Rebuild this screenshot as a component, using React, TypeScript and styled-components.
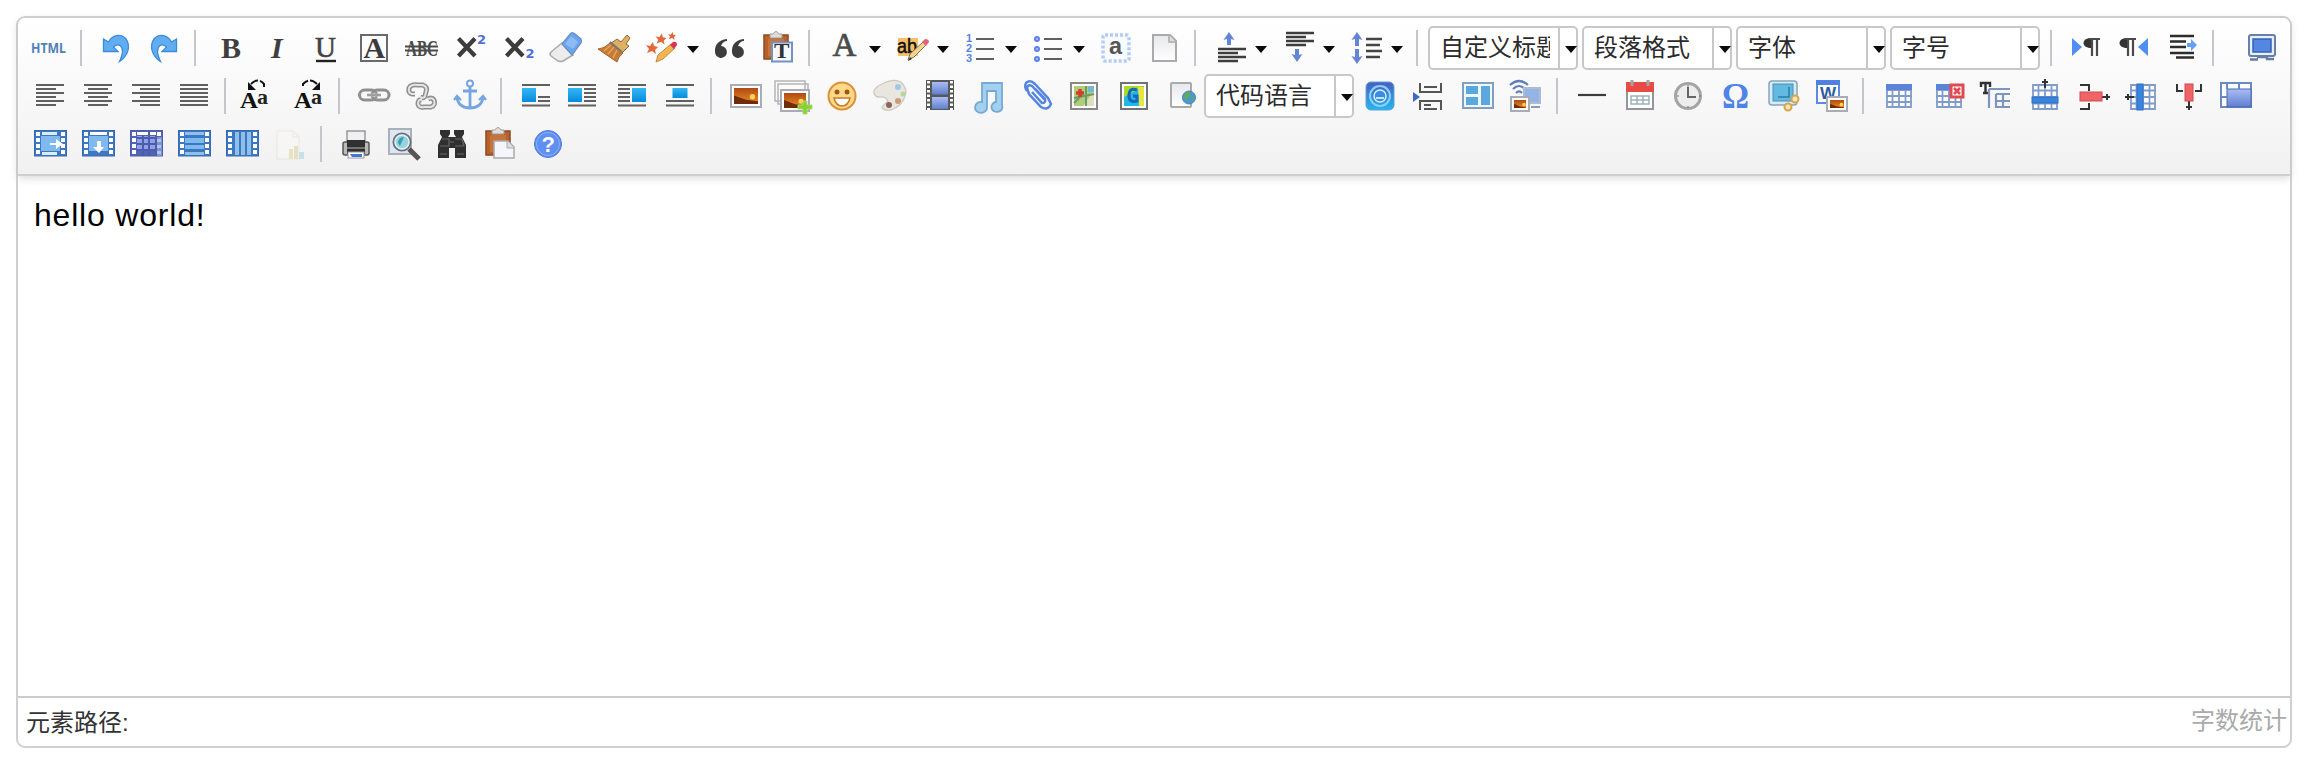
import React from 'react';
import styled, { createGlobalStyle } from 'styled-components';

const sans = `"Liberation Sans", "Noto Sans CJK SC", sans-serif`;

const GlobalStyle = createGlobalStyle`
  * { box-sizing: border-box; }
  body { margin: 0; background: #fff; font-family: ${sans}; }
`;

const Page = styled.main`
  height: 760px;
  padding: 16px 24px 12px 16px;
`;
const Editor = styled.section`
  display: flex;
  flex-direction: column;
  height: 732px;
  border: 2px solid #d0d0d0;
  border-radius: 9px;
  background: #fff;
`;
const Toolbar = styled.header`
  height: 158px;
  padding: 6px 8px 0;
  border-bottom: 2px solid #cfcfcf;
  border-radius: 7px 7px 0 0;
  background: linear-gradient(#ffffff, #f1f1f1);
  box-shadow: 0 2px 8px rgba(190, 190, 190, 0.6);
`;
const Row = styled.div`
  display: flex;
  align-items: center;
  height: 48px;
`;
const Button = styled.button<{ $faded?: boolean; $gap?: number; $split?: boolean }>`
  display: flex;
  flex: none;
  align-items: center;
  width: ${p => (p.$split ? 68 : 48)}px;
  height: 48px;
  margin: 0 0 0 ${p => p.$gap ?? 0}px;
  padding: 0;
  border: 0;
  background: none;
  opacity: ${p => (p.$faded ? 0.3 : 1)};
`;
const Glyph = styled.svg`
  flex: none;
  width: 48px;
  height: 48px;
  overflow: visible;
`;
const Caret = styled.span<{ $gap: number }>`
  width: 0;
  height: 0;
  margin: 3px 0 0 ${p => p.$gap}px;
  border: 6px solid transparent;
  border-top: 7px solid #0a0a0a;
  border-bottom: 0;
`;
const Separator = styled.i`
  flex: none;
  width: 2px;
  height: 36px;
  margin: 0 10px 0 6px;
  background: #c6c6ca;
`;
const Combo = styled.div<{ $gap?: number }>`
  display: flex;
  flex: none;
  width: 150px;
  height: 44px;
  margin: 0 4px 0 ${p => p.$gap ?? 0}px;
  border: 2px solid #c8c8c8;
  border-radius: 5px;
  background: #fff;
`;
const ComboLabel = styled.span`
  width: 120px;
  padding-left: 10px;
  overflow: hidden;
  white-space: nowrap;
  color: #2b2b2b;
  font: 24px/40px ${sans};
`;
const ComboArrow = styled.span`
  display: flex;
  align-items: center;
  width: 18px;
  margin-left: 8px;
  border-left: 2px solid #c8c8c8;
`;
const Content = styled.div`
  flex: 1;
  padding: 20px 16px;
  color: #000;
  font: 32px/38px ${sans};
  letter-spacing: 0.8px;
`;
const Footer = styled.footer`
  display: flex;
  justify-content: space-between;
  height: 50px;
  padding: 0 3px 0 8px;
  border-top: 2px solid #cbcbcb;
  color: #333;
  font: 24px/50px ${sans};
`;
const WordCount = styled.span`
  color: #aaa;
  line-height: 46px;
`;

const serif = 'Liberation Serif, serif';
const dark = '#3f3f3f';

type Line = [number, number, number];
const Lines = ({ rows, color = '#606060', w = 2 }: { rows: Line[]; color?: string; w?: number }) => (
  <path d={rows.map(([x1, x2, y]) => `M${x1} ${y}H${x2}`).join('')} stroke={color} strokeWidth={w} />
);
const Grid = ({ x = 12, y = 12, w = 26, h = 24 }: { x?: number; y?: number; w?: number; h?: number }) => (
  <>
    <rect x={x} y={y} width={w} height={h} fill="#fff" />
    <path
      d={`M${x + 1} ${y + 1}h${w - 2}v${h - 2}h${2 - w}zM${x} ${y + h / 4}h${w}M${x} ${y + h / 2}h${w}M${x} ${y + (h * 3) / 4}h${w}M${x + w / 4} ${y}v${h}M${x + w / 2} ${y}v${h}M${x + (w * 3) / 4} ${y}v${h}`}
      fill="none" stroke="#7f9ccb" strokeWidth="1.8"
    />
  </>
);
const Photo = ({ x, y, w = 32, h = 24 }: { x: number; y: number; w?: number; h?: number }) => (
  <>
    <rect x={x + 1} y={y + 1} width={w - 2} height={h - 2} fill="#fff" stroke="#a9adb3" strokeWidth="2" />
    <rect x={x + 4} y={y + 4} width={w - 8} height={h - 8} fill="url(#sunset)" />
    <path d={`M${x + 4} ${y + h * 0.48}L${x + w * 0.5} ${y + h * 0.66}L${x + w - 4} ${y + h * 0.72}V${y + h - 4}H${x + 4}z`} fill="#6d2c0c" />
    <circle cx={x + w * 0.7} cy={y + h * 0.53} r={w / 12} fill="#ffd65a" />
  </>
);
const Undo = () => (
  <path d="M11.500 15L16.500 18C20 11 29 9 34 15C39 22 36 32 27.500 37.500C31 30 31.500 24 28 21.500C25.500 20 23 21.500 21.500 23L26 27.500H11.500Z" fill="#61adf0" stroke="#3c8bdc" strokeWidth="1.300" />
);
const Pilcrow = ({ x }: { x: number }) => (
  <>
    <path d={`M${x + 7} 14C${x - 3} 14 ${x - 3} 24 ${x + 7} 24Z`} fill="#333" />
    <path d={`M${x + 5} 15H${x + 16}M${x + 8} 14V32M${x + 13} 14V32`} stroke="#4a4a4a" strokeWidth="2.200" />
  </>
);
const ArrowV = ({ x, y, h = 13, down }: { x: number; y: number; h?: number; down?: boolean }) => (
  <g transform={down ? `translate(0 ${2 * y + h}) scale(1 -1)` : undefined}>
    <path d={`M${x} ${y}l5.500 8l-3.500 -1V${y + h}h-4V${y + 7}l-3.500 1z`} fill="#6485d6" />
  </g>
);
const Star = ({ x, y, s = 1 }: { x: number; y: number; s?: number }) => (
  <path transform={`translate(${x} ${y}) scale(${s})`} d="M1 -6L2 -2L6 -1L3 2L4 6L0 3L-5 5L-3 1L-6 -3L-2 -2Z" fill="#e2683c" />
);
const CaseLetters = ({ x }: { x: number }) => (
  <>
    <text x={x} y="36" fontFamily={serif} fontWeight="700" fontSize="24" fill="#111" textLength="18" lengthAdjust="spacingAndGlyphs">A</text>
    <text x={x + 17} y="32" fontFamily={serif} fontWeight="700" fontSize="22" fill="#222">a</text>
  </>
);
const FilmFrame = ({ children, purple }: { children?: React.ReactNode; purple?: boolean }) => (
  <>
    <rect x="8.500" y="10.500" width="32" height="25.500" fill={purple ? '#5262b5' : '#3e78c2'} stroke={purple ? '#4c5cab' : '#366caf'} />
    <rect x="15" y="16" width="19" height="15" fill={purple ? '#8da2e8' : '#7fb9f0'} />
    <path d="M12 12V36M37 12V36" stroke="#fff" strokeWidth="4" strokeDasharray="4 2" />
    {children}
  </>
);
const Board = () => (
  <>
    <path d="M10 11H34V35H10Z" fill="#b5622d" stroke="#8e4721" strokeWidth="1.500" />
    <path d="M14 15H30V32H14Z" fill="#c6743b" />
    <path d="M16 14V10H19Q22 5 25 10H28V14Z" fill="#ddd" stroke="#a19b95" />
  </>
);
const Wrap = ({ boxX, rows, h = 14, y = 16 }: { boxX: number; rows: Line[]; h?: number; y?: number }) => (
  <>
    <Lines rows={rows} />
    <rect x={boxX} y={y} width={h === 14 ? 14 : 15} height={h} fill="url(#sky)" />
  </>
);
const TickArrow = ({ d }: { d: string }) => <path d={d} fill="none" stroke="#333" strokeWidth="2" />;
const X = () => <path d="M12.500 14.500L29 32M29 14.500L12.500 32" stroke="#3c3c3c" strokeWidth="4.200" />;
const chain = 'M17 22H14Q10 21 11 16Q13 12 20 13H25Q30 15 28 20L27 24Q26 27 22 25M24 28Q20 27 20 32Q21 36 26 35H33Q38 33 36 28Q34 25 30 27';

const G: Record<string, React.ReactNode> = {
  html: <text x="5" y="29" fontFamily="Noto Sans, sans-serif" fontWeight="700" fontSize="15" fill="#5180b8" textLength="35" lengthAdjust="spacingAndGlyphs">HTML</text>,
  undo: <Undo />,
  redo: <g transform="translate(48 0) scale(-1 1)"><Undo /></g>,
  bold: <text x="15" y="34" fontFamily={serif} fontWeight="700" fontSize="30" fill={dark}>B</text>,
  italic: <text x="17" y="34" fontFamily={serif} fontWeight="700" fontStyle="italic" fontSize="30" fill={dark}>I</text>,
  underline: <><text x="13" y="33" fontFamily={serif} fontSize="29" fill="#444" stroke="#444" strokeWidth=".6" textLength="22">U</text><Lines rows={[[14, 34, 37]]} color="#222" w={2.4} /></>,
  border: <><rect x="11" y="11" width="26" height="26" fill="none" stroke="#6a6a6a" strokeWidth="2" /><text x="13.500" y="34" fontFamily={serif} fontWeight="700" fontSize="30" fill="#3b3b3b">A</text></>,
  strike: <><text x="8" y="32" fontFamily={serif} fontWeight="700" fontSize="23" fill="#4a4a4a" textLength="32" lengthAdjust="spacingAndGlyphs">ABC</text><Lines rows={[[7, 40, 22.5], [7, 40, 26.5]]} color="#4a4a4a" w={1.8} /></>,
  sup: <><X /><text x="31" y="20" fontFamily="DejaVu Sans, sans-serif" fontWeight="700" fontSize="13" fill="#4b72df">2</text></>,
  sub: <><X /><text x="31.500" y="34" fontFamily="DejaVu Sans, sans-serif" fontWeight="700" fontSize="13" fill="#4b72df">2</text></>,
  eraser: <><path d="M20 19L31 31L21 37Q19 38 16 37L9 32Q7 30 9 28Z" fill="#ececec" stroke="#aaa" strokeWidth="1.500" /><path d="M29 9Q31 8 33 10L39 15Q40 17 39 19L30 31L20 20Z" fill="#6ba4ec" stroke="#6790cd" strokeWidth="1.300" /><path d="M29 12L36 18L31 25L23 20Z" fill="#8dbbf3" /></>,
  broom: <><path d="M37 11L40 14L36 20L39 22L31 30L20 20L27 15L31 18Z" fill="#ddb062" stroke="#9b6432" /><path d="M20 19L33 29Q28 33 27 38L8 25Q14 25 20 19Z" fill="#c77b35" stroke="#a5602a" /><path d="M21 21L14 27M24 23L18 30M27 26L23 34" stroke="#e5a65a" strokeWidth="1.500" /><path d="M20 18L32 28" stroke="#777" strokeWidth="2" /></>,
  wand: <><path d="M18 38L20 31L33 20L37 24L25 35Z" fill="#f3b452" stroke="#c38b3c" /><path d="M32 21L35 18Q39 17 39 21L36 25Z" fill="#d8364f" /><Star x={14} y={24} /><Star x={23} y={15} s={0.9} /><Star x={34} y={12} s={0.65} /></>,
  quote: <g fill="#3d3d3d"><path d="M21 15C12 16 9 21 9 27a6 6 0 1 0 6-5Q17 17 21 17ZM38 15C29 16 26 21 26 27a6 6 0 1 0 6-5Q34 17 38 17Z" /></g>,
  pasteText: <><Board /><rect x="18" y="18.500" width="20" height="19" fill="#f6f7fb" stroke="#7391c4" strokeWidth="2" /><text x="20" y="34" fontFamily={serif} fontWeight="700" fontSize="20" textLength="15.500" lengthAdjust="spacingAndGlyphs" fill="#333">T</text></>,
  color: <text x="12.500" y="32" fontFamily={serif} fontSize="33" fill="#4b4b4b" stroke="#4b4b4b" strokeWidth=".7">A</text>,
  mark: <><rect x="10" y="14" width="20" height="18" fill="#f8bf6b" /><text x="9" y="29" fontFamily="Liberation Sans, sans-serif" fontSize="20" fill="#111" stroke="#111" strokeWidth=".5" textLength="20" lengthAdjust="spacingAndGlyphs">ab</text><path d="M20 36L22 30L35 18L38 21L26 33Z" fill="#eed690" stroke="#85724e" /><path d="M34 18L37 15Q41 15 41 18L38 22Z" fill="#e06478" /><path d="M20 37L22 33L24 35Z" fill="#333" /></>,
  ol: <><text x="10" y="18" fontFamily="Liberation Sans, sans-serif" fontWeight="700" fontSize="11" fill="#5b83e6">1</text><text x="10" y="28" fontFamily="Liberation Sans, sans-serif" fontWeight="700" fontSize="11" fill="#5b83e6">2</text><text x="10" y="38" fontFamily="Liberation Sans, sans-serif" fontWeight="700" fontSize="11" fill="#5b83e6">3</text><Lines rows={[[20, 38, 15], [20, 38, 25], [20, 38, 35]]} /></>,
  ul: <><g fill="#b7c7f8" stroke="#5b80ed" strokeWidth="2"><circle cx="13" cy="15" r="2" /><circle cx="13" cy="25" r="2" /><circle cx="13" cy="35" r="2" /></g><Lines rows={[[20, 38, 15], [20, 38, 25], [20, 38, 35]]} /></>,
  all: <><rect x="11" y="11" width="26" height="26" rx="2" fill="#f8fbff" stroke="#b4cbf2" strokeWidth="3.500" strokeDasharray="3 2" /><text x="17" y="30" fontFamily="Liberation Sans, sans-serif" fontWeight="700" fontSize="24" fill="#555" textLength="13" lengthAdjust="spacingAndGlyphs">a</text></>,
  doc: <><path d="M13 11H30L36 17V37H13Z" fill="url(#paper)" stroke="#aaa" strokeWidth="2" /><path d="M29 11V18H36" fill="#ddd" stroke="#aaa" strokeWidth="1.500" /></>,
  rowTop: <><ArrowV x={23} y={8} /><Lines color="#3d3d3d" w={2.3} rows={[[12, 40, 25], [12, 32, 29], [12, 40, 33], [12, 32, 37]]} /></>,
  rowBottom: <><ArrowV x={23} y={25} down /><Lines color="#3d3d3d" w={2.3} rows={[[12, 40, 9], [12, 32, 13], [12, 40, 17], [12, 32, 21]]} /></>,
  lineHeight: <><ArrowV x={15} y={8} h={14} /><ArrowV x={15} y={25} h={15} down /><Lines color="#444" w={2.3} rows={[[24, 40, 15], [24, 38, 21], [24, 40, 27], [24, 38, 33]]} /></>,
  ltr: <><path d="M10 14L20 23L10 32Z" fill="#4f8ff4" /><Pilcrow x={22} /></>,
  rtl: <><Pilcrow x={10} /><path d="M38 14L28 23L38 32Z" fill="#4f8ff4" /></>,
  indent: <><Lines color="#2c2c2c" rows={[[12, 36, 12], [12, 28, 17.5], [12, 28, 23], [12, 36, 29], [18, 36, 33.5]]} w={2.4} /><path d="M29 19H33V15L39 21L33 27V23H29Z" fill="#64a0f4" /></>,
  screen: <><rect x="11" y="11" width="26" height="21" rx="2" fill="#e6effa" stroke="#6680a9" strokeWidth="2" /><rect x="15" y="15" width="18" height="13" fill="#5487e2" stroke="#3762b7" strokeWidth="1.500" /><path d="M19 33H29V35H36M12 35.500H20" fill="none" stroke="#657da5" strokeWidth="2.400" /></>,
  alignL: <Lines rows={[[10, 38, 13], [10, 30, 17], [10, 38, 21], [10, 30, 25], [10, 38, 29], [10, 30, 33]]} />,
  alignC: <Lines rows={[[10, 38, 13], [14, 34, 17], [10, 38, 21], [14, 34, 25], [10, 38, 29], [14, 34, 33]]} />,
  alignR: <Lines rows={[[10, 38, 13], [18, 38, 17], [10, 38, 21], [18, 38, 25], [10, 38, 29], [18, 38, 33]]} />,
  alignJ: <Lines rows={[[10, 38, 13], [10, 38, 17], [10, 38, 21], [10, 38, 25], [10, 38, 29], [10, 38, 33]]} />,
  upper: <><CaseLetters x={4} /><path d="M12 10V18H20Z" fill="#111" /><path d="M15 12Q22 5 28 12V16" fill="none" stroke="#111" strokeWidth="2" strokeDasharray="8 2" /></>,
  lower: <><CaseLetters x={10} /><path d="M36 10V18H28Z" fill="#111" /><path d="M33 12Q26 5 19 12V16" fill="none" stroke="#111" strokeWidth="2" strokeDasharray="8 2" /></>,
  link: <><g fill="none" stroke="#909090" strokeWidth="3"><rect x="9.500" y="18" width="17" height="10" rx="5" /><rect x="22" y="18" width="17" height="10" rx="5" /></g><path d="M17 23H31" stroke="#c6c6c6" strokeWidth="3" /><path d="M17 23H31" stroke="#777" strokeWidth="1" /></>,
  unlink: <g fill="none"><path d={chain} stroke="#8f8f8f" strokeWidth="5" /><path d={chain} stroke="#e4e4e4" strokeWidth="2" /></g>,
  anchor: <g fill="none" stroke="#75a5df" strokeWidth="2.800"><circle cx="24" cy="11.500" r="3" strokeWidth="2" /><path d="M24 15V35M17 19H31M11 26Q13 36 24 36Q35 36 37 26" /><path d="M8 28L11 24L15 28M33 28L37 24L40 28" strokeWidth="2.200" /></g>,
  wrapNone: <Wrap boxX={10} rows={[[10, 38, 13], [26, 38, 25], [26, 38, 29], [10, 38, 33.5]]} />,
  wrapLeft: <Wrap boxX={8} rows={[[8, 36, 13], [24, 36, 17], [24, 36, 21], [24, 36, 25], [24, 36, 29], [8, 36, 33.5]]} />,
  wrapRight: <Wrap boxX={24} rows={[[10, 38, 13], [10, 22, 17], [10, 22, 21], [10, 22, 25], [10, 22, 29], [10, 38, 33.5]]} />,
  wrapCenter: <Wrap boxX={16.5} h={10} rows={[[10, 38, 13], [10, 38, 29], [10, 38, 33.5]]} />,
  image: <Photo x={8} y={12} />,
  images: <><path d="M5 9H35V29H5ZM8 12H38V32H8Z" fill="#fafafa" stroke="#b5b5b5" strokeWidth="1.500" /><Photo x={10} y={17} w={30} h={23} /><path d="M33 29H37V33H42V37H37V42H33V37H28V33H33Z" fill="#87d132" stroke="#a9dc67" /></>,
  emoji: <><circle cx="24" cy="24" r="13.500" fill="#ffd98a" stroke="#dc9138" strokeWidth="2" /><circle cx="19" cy="20" r="2.500" fill="#9d5719" /><circle cx="29" cy="20" r="2.500" fill="#9d5719" /><path d="M16 26H32Q30 34 24 34Q18 34 16 26Z" fill="#fff" stroke="#c77a25" strokeWidth="1.500" /></>,
  palette: <><path d="M8 21Q7 16 16 12Q27 6 35 10Q42 17 39 24Q36 34 25 38Q17 39 16 35L22 29Q20 24 13 25Q9 25 8 21Z" fill="#e9e6e0" stroke="#cec9c0" strokeWidth="1.300" /><circle cx="32" cy="15" r="3" fill="#9fc8e8" /><circle cx="37" cy="22" r="2.500" fill="#b8d59a" /><circle cx="32" cy="29" r="3" fill="#c99b7d" /><circle cx="23" cy="33" r="3" fill="#8a6754" /></>,
  video: <><rect x="12" y="8" width="28" height="30" fill="#585858" /><rect x="18" y="10" width="16" height="12.500" fill="url(#film)" /><rect x="18" y="25" width="16" height="12" fill="url(#film)" /><path d="M14.500 9V38M37.500 9V38" stroke="#fff" strokeWidth="3" strokeDasharray="2.500 2" /></>,
  music: <path d="M20 11H40V33A5.500 5 0 1 1 34 30V19H25V35A6 5.500 0 1 1 20 30Z" fill="#a4d0f0" stroke="#75a9d3" strokeWidth="1.800" />,
  clip: <path d="M35 28L22 14Q18 12 17 16L19 22L31 35Q38 39 41 32L38 26L25 12Q20 7 16 11Q14 15 17 19M22 20L32 31Q36 31 35 27L25 17" fill="none" stroke="#5585e0" strokeWidth="2.500" />,
  map: <><rect x="13" y="11" width="26" height="26" fill="#fff" stroke="#888" strokeWidth="2" /><rect x="16" y="14" width="20" height="20" fill="#b2cd78" /><path d="M25 34L36 19V34Z" fill="#dfdfbf" /><path d="M28 14V34M16 26L36 22M16 31L24 23" stroke="#689c69" strokeWidth="2" /><rect x="30" y="14" width="6" height="6" fill="#73b9d3" /><path d="M22 17V25M18 21H26" stroke="#d33d2a" strokeWidth="3.500" /></>,
  gmap: <><rect x="15" y="11" width="26" height="26" fill="#fff" stroke="#6f7379" strokeWidth="2" /><path d="M18 14H38V34H18Z" fill="#20b7e5" /><path d="M18 14H38L18 25Z" fill="#a8db27" /><path d="M32 15H38V34H33Z" fill="#e5e641" /><path d="M31 18Q23 15 23 24Q23 31 31 29V24H27" fill="none" stroke="#1768bd" strokeWidth="3" /></>,
  frame: <><rect x="17" y="11" width="20" height="24" rx="1" fill="url(#paper)" stroke="#aaa" strokeWidth="2" /><circle cx="35" cy="25.500" r="6.500" fill="#469bc8" stroke="#5281b0" /><path d="M32 20Q38 20 36 24L33 28Q29 25 32 20ZM37 28L40 25V29Z" fill="#65a959" /></>,
  app: <><rect x="8" y="10" width="28" height="28" rx="5" fill="url(#app)" stroke="#649edb" /><circle cx="22" cy="24" r="10" fill="none" stroke="#91cdf6" strokeWidth="2" /><circle cx="22" cy="24" r="6" fill="#3c8ddd" stroke="#d3edff" strokeWidth="1.500" /><path d="M18 25H26V27H18Z" fill="#bce7ff" /></>,
  pageBreak: <><path d="M7 20V30L14 25Z" fill="#3d68c5" /><path d="M14 11V20H35V11M18 15H31M14 38V29H35V38M18 33H25M18 37H31" fill="none" stroke="#555" strokeWidth="2" /></>,
  template: <><rect x="9" y="11" width="30" height="25" fill="#eef8ff" stroke="#829fc0" strokeWidth="2" /><path d="M12 14H24V22H12ZM12 25H24V33H12ZM27 14H36V33H27Z" fill="#5ba8de" /></>,
  wireless: <><path d="M8 13Q17 5 26 13M11 17Q17 11 23 17M14 21Q17 18 20 21" fill="none" stroke="#617fbd" strokeWidth="2.200" /><rect x="22" y="16" width="16" height="15" fill="#92b4e6" stroke="#aebbd0" strokeWidth="2" /><path d="M29 35H38" stroke="#8b9bb5" strokeWidth="2" /><Photo x={8} y={24} w={20} h={16} /></>,
  hr: <Lines rows={[[10, 38, 23]]} color="#3c3c3c" w={2.2} />,
  date: <><rect x="11" y="12" width="26" height="25" fill="#fff" stroke="#969696" strokeWidth="2" /><rect x="10" y="10" width="28" height="10" fill="#e84a45" /><path d="M16 8V14M32 8V14" stroke="#a4a4a4" strokeWidth="3" /><path d="M15 24H33V32H15ZM21 24V32M27 24V32M15 28H33" fill="none" stroke="#9fb1bf" strokeWidth="1.500" /></>,
  time: <><circle cx="24" cy="24" r="12.500" fill="#ededed" stroke="#a4a4a4" strokeWidth="3" /><path d="M24 15V25H32" fill="none" stroke="#666" strokeWidth="2" /><path d="M24 13V15M13 24H15M35 24H37M24 34V36" stroke="#777" /></>,
  omega: <text x="10" y="36" fontFamily={serif} fontWeight="700" fontSize="36" fill="#4e83e8" textLength="27" lengthAdjust="spacingAndGlyphs">Ω</text>,
  snap: <><rect x="9" y="9" width="28" height="24" rx="3" fill="#d8eaf5" stroke="#82a7bb" strokeWidth="1.500" /><rect x="13" y="12" width="20" height="17" fill="#61bbe1" stroke="#4990b7" /><path d="M18 25H29V15" fill="none" stroke="#287da6" strokeWidth="1.500" /><g fill="#f4e5b5" stroke="#d7a44e" strokeWidth="2"><circle cx="35" cy="27" r="3.500" /><circle cx="28" cy="35" r="3.500" /></g></>,
  word: <><rect x="9" y="10" width="22" height="21" fill="#fff" stroke="#5d8be0" strokeWidth="2" /><rect x="8" y="8" width="24" height="5" fill="#4e81e2" /><text x="12" y="27" fontFamily="Liberation Sans, sans-serif" fontWeight="700" fontSize="17" fill="#2f5ca4">W</text><Photo x={18} y={24} w={22} h={16} /></>,
  table: <><Grid /><rect x="12" y="12" width="26" height="6" fill="#5b83d8" /></>,
  tableDel: <><Grid x={14} /><rect x="14" y="12" width="18" height="6" fill="#5b83d8" /><rect x="29" y="13" width="12" height="12" fill="#fff" stroke="#e34950" strokeWidth="3" /><path d="M32 16L38 22M38 16L32 22" stroke="#e34950" strokeWidth="2.600" /></>,
  caption: <><path d="M11 15V11H20V15M15.500 11V21M13 21H18" fill="none" stroke="#303030" strokeWidth="2.400" /><path d="M19 17H40M19 17V36M26 22H40M26 22V36M26 29H40M26 35H40M33 23V35" fill="none" stroke="#7e95bf" strokeWidth="2.200" /></>,
  rowAdd: <><Grid x={14} w={26} h={26} /><rect x="14" y="25" width="26" height="6" fill="#3c83db" stroke="#2b71c8" /><TickArrow d="M27 16V7M24 10H30" /></>,
  rowDel: <><TickArrow d="M14 13H23V19M14 37H23V31M35 25H44M41 22V28" /><rect x="14" y="20" width="22" height="9" fill="#ef6466" stroke="#cf4b4e" /></>,
  colAdd: <><Grid x={16} w={26} h={26} /><rect x="23" y="12" width="6" height="26" fill="#3c83db" stroke="#2b71c8" /><TickArrow d="M20 25H11M14 22V28" /></>,
  colDel: <><TickArrow d="M15 12V19H21M39 12V19H33M27 29V38M24 35H30" /><rect x="23" y="12" width="8" height="17" fill="#ef6466" stroke="#cf4b4e" /></>,
  merge: <><rect x="11" y="11" width="30" height="24" fill="#fff" stroke="#6a8bc2" strokeWidth="2" /><rect x="17" y="17" width="24" height="18" fill="url(#film)" stroke="#4768b2" /><path d="M17 11V17M29 11V17M11 25H17" stroke="#6a8bc2" strokeWidth="2" /></>,
  mergeR: <FilmFrame><path d="M16 12H31V15H16ZM16 32H31V35H16Z" fill="#ddecfc" /><path d="M24 23H30V19L37 24L30 29V25H24Z" fill="#fff" /></FilmFrame>,
  mergeD: <FilmFrame><path d="M16 12H33V15H16Z" fill="#fff" /><path d="M23 21H27V27H30L25 33L19 27H23Z" fill="#fff" /></FilmFrame>,
  split: <FilmFrame purple><path d="M15 12H34V15H15Z" fill="#fff" /><path d="M15 18H40M15 24H40M15 30H40M21 16V36M27 10V36M34 16V36" stroke="#4e5dab" strokeWidth="2" /><path d="M35 17H40V36H35Z" fill="#94a9e3" opacity=".7" /></FilmFrame>,
  splitRows: <FilmFrame><path d="M15 12H34V15H15ZM15 32H34V35H15Z" fill="#91bfeb" /><Lines color="#3979c0" rows={[[15, 34, 17], [15, 34, 24], [15, 34, 30]]} /></FilmFrame>,
  splitCols: <FilmFrame><path d="M15 12H34V35H15Z" fill="#91bfeb" /><path d="M16 11V36M22 11V36M28 11V36M34 11V36" stroke="#3979c0" strokeWidth="2" /></FilmFrame>,
  chart: <><path d="M11 11H27L33 17V39H11Z" fill="#fffdf5" stroke="#dedcd6" strokeWidth="1.500" /><path d="M27 11V17H33" fill="none" stroke="#ccc" /><path d="M23 29H27V39H23Z" fill="#d5c54c" /><path d="M28 26H32V39H28Z" fill="#c0b758" /><path d="M33 32H38V39H33Z" fill="#65b9d5" /></>,
  print: <><rect x="15" y="11" width="18" height="12" fill="#f0f0f2" stroke="#999" strokeWidth="1.500" /><rect x="11" y="22" width="26" height="13" rx="2" fill="#bbb" stroke="#555" strokeWidth="1.500" /><path d="M15 20H33V34H15Z" fill="#303030" /><path d="M15 28H33" stroke="#747474" strokeWidth="2" /><rect x="16" y="32" width="16" height="6" fill="#fff" stroke="#999" /><path d="M18 34H30V37H20Z" fill="#4575d8" /></>,
  preview: <><rect x="9" y="9" width="22" height="25" fill="#dce6f4" stroke="#aaafb8" strokeWidth="2" /><path d="M29 29L39 39" stroke="#555" strokeWidth="5" /><circle cx="22" cy="22" r="8.500" fill="#95d5e0" stroke="#696e74" strokeWidth="2" /><circle cx="22" cy="22" r="7" fill="none" stroke="#e4eff2" strokeWidth="1.500" /><path d="M18 23Q18 17 24 17L20 26Z" fill="#3c9eb5" /></>,
  find: <><path d="M12 10H22V14L20 17H28L26 14V10H36V14L34 17L38 25V38H27V28H21V38H10V25L14 17L12 14Z" fill="#303030" /><path d="M14 19H21V26H12M27 19H34L36 26H27M12 34H19M29 34H36M22 22H26" fill="none" stroke="#666" strokeWidth="1.200" /></>,
  paste: <><Board /><path d="M18 21H32L38 27V38H18Z" fill="#f4f6fb" stroke="#aaa" strokeWidth="1.500" /><path d="M31 21V28H38" fill="#ddd" stroke="#aaa" /></>,
  help: <><circle cx="24" cy="24" r="13.500" fill="#5f8ff0" stroke="#507ed8" /><circle cx="24" cy="24" r="11.500" fill="none" stroke="#8cafff" /><text x="17.500" y="32" fontFamily="Liberation Sans, sans-serif" fontWeight="700" fontSize="22" fill="#fff">?</text></>,
};

interface ToolProps { name: string; split?: boolean; gap?: number; faded?: boolean }
const Tool = ({ name, split, gap, faded }: ToolProps) => (
  <Button aria-label={name} $split={split} $gap={gap} $faded={faded}>
    <Glyph viewBox="0 0 48 48">{G[name]}</Glyph>
    {split && <Caret $gap={1} />}
  </Button>
);
const Tools = ({ names }: { names: string }) => (
  <>
    {names.split(' ').map((n, i) =>
      n === '|' ? <Separator key={i} /> : <Tool key={i} name={n.replace('+', '')} split={n.endsWith('+')} />
    )}
  </>
);
const Select = ({ label, gap }: { label: string; gap?: number }) => (
  <Combo $gap={gap}>
    <ComboLabel>{label}</ComboLabel>
    <ComboArrow><Caret $gap={5} /></ComboArrow>
  </Combo>
);
const Gradient = ({ id, from, to }: { id: string; from: string; to: string }) => (
  <linearGradient id={id} x1="0" y1="0" x2="0" y2="1">
    <stop stopColor={from} />
    <stop offset="1" stopColor={to} />
  </linearGradient>
);
const Defs = styled.svg`
  display: block;
  width: 0;
  height: 0;
`;

export default function App() {
  return (
    <Page>
      <GlobalStyle />
      <Defs>
        <defs>
          <Gradient id="sunset" from="#b04a14" to="#ee8b24" />
          <Gradient id="sky" from="#32b7f4" to="#078bdc" />
          <Gradient id="paper" from="#e7e8ec" to="#ffffff" />
          <Gradient id="film" from="#a9bdf2" to="#617fd0" />
          <Gradient id="app" from="#465fc2" to="#22b8ef" />
        </defs>
      </Defs>
      <Editor>
        <Toolbar>
          <Row>
            <Tools names="html | undo redo | bold italic underline border strike sup sub eraser broom wand+ quote pasteText | color+ mark+ ol+ ul+ all doc | rowTop+ rowBottom+ lineHeight+ |" />
            <Select label="自定义标题" />
            <Select label="段落格式" />
            <Select label="字体" />
            <Select label="字号" />
            <Tools names="| ltr rtl indent |" />
            <Tool name="screen" gap={14} />
          </Row>
          <Row>
            <Tools names="alignL alignC alignR alignJ | upper lower | link unlink anchor | wrapNone wrapLeft wrapRight wrapCenter | image images emoji palette video music clip map gmap frame" />
            <Select label="代码语言" gap={2} />
            <Tools names="app pageBreak template wireless | hr date time omega snap word | table tableDel caption rowAdd rowDel colAdd colDel merge" />
          </Row>
          <Row>
            <Tools names="mergeR mergeD split splitRows splitCols" />
            <Tool name="chart" faded />
            <Tools names="| print preview find paste help" />
          </Row>
        </Toolbar>
        <Content>hello world!</Content>
        <Footer>
          <span>元素路径:</span>
          <WordCount>字数统计</WordCount>
        </Footer>
      </Editor>
    </Page>
  );
}
